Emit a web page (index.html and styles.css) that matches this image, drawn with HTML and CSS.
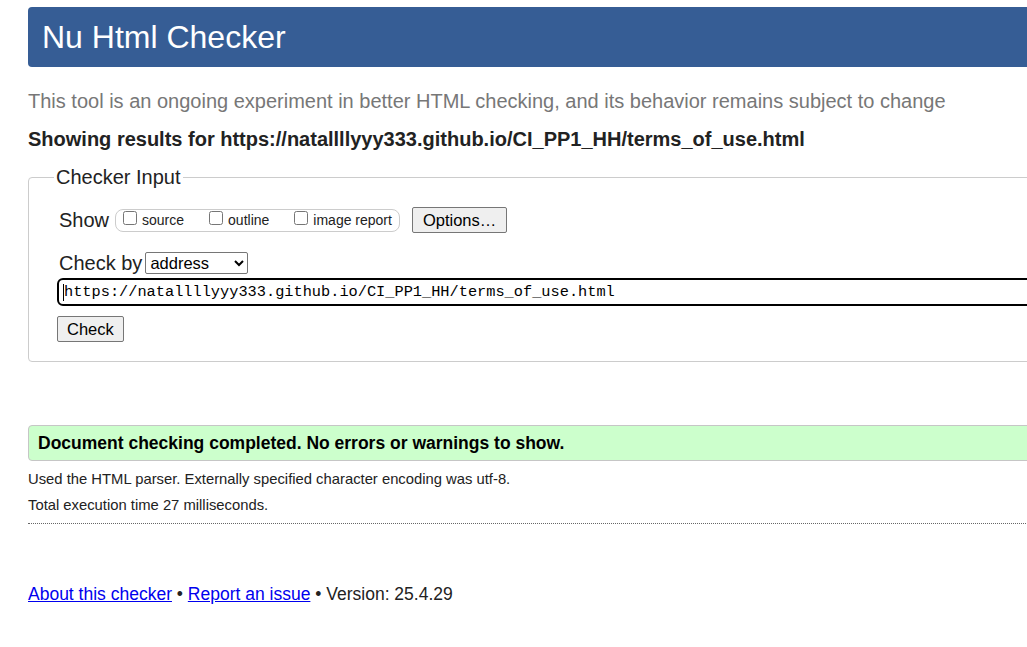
FILE: index.html
```html
<!DOCTYPE html>
<html lang="en">
<head>
<meta charset="utf-8">
<title>Nu Html Checker</title>
<link rel="stylesheet" href="styles.css">
</head>
<body>
<div class="page">
  <h1 class="header">Nu Html Checker</h1>
  <p class="intro">This tool is an ongoing experiment in better HTML checking, and its behavior remains subject to change</p>
  <p class="results">Showing results for https://natallllyyy333.github.io/CI_PP1_HH/terms_of_use.html</p>
  <fieldset class="input-box">
    <legend class="legend">Checker Input</legend>
    <div class="row show-row">
      <span class="label">Show</span>
      <span class="pill">
        <label class="opt"><input type="checkbox" class="cb"><span>source</span></label>
        <label class="opt"><input type="checkbox" class="cb"><span>outline</span></label>
        <label class="opt"><input type="checkbox" class="cb"><span>image report</span></label>
      </span>
      <button class="btn options">Options…</button>
    </div>
    <div class="row by-row">
      <span class="label">Check by</span>
      <select class="select"><option>address</option></select>
    </div>
    <div class="url-wrap">
      <span class="caret"></span>
      <input class="url" type="text" value="https://natallllyyy333.github.io/CI_PP1_HH/terms_of_use.html">
    </div>
    <div class="row">
      <button class="btn check">Check</button>
    </div>
  </fieldset>
  <div class="success">Document checking completed. No errors or warnings to show.</div>
  <p class="meta">Used the HTML parser. Externally specified character encoding was utf-8.</p>
  <p class="meta">Total execution time 27 milliseconds.</p>
  <div class="dots"></div>
  <p class="footer"><a href="#">About this checker</a> • <a href="#">Report an issue</a> • Version: 25.4.29</p>
</div>
</body>
</html>
```

FILE: styles.css
```css
html, body {
  margin: 0;
  padding: 0;
  background: #fff;
  overflow: hidden;
}
body {
  font-family: "Liberation Sans", Arial, sans-serif;
  color: #222;
  width: 1027px;
  height: 647px;
}
.page {
  width: 1100px;
  padding: 7px 0 0 28px;
}
.header {
  margin: 0;
  height: 60px;
  box-sizing: border-box;
  background: #365d95;
  color: #fff;
  font-weight: normal;
  font-size: 32px;
  line-height: 60px;
  padding-left: 14px;
  border-radius: 4px;
}
.intro {
  margin: 22px 0 0;
  font-size: 20px;
  line-height: 24px;
  color: #777;
}
.results {
  margin: 14px 0 0;
  font-size: 20px;
  line-height: 24px;
  font-weight: bold;
  color: #222;
}
.input-box {
  margin: 14px 0 0;
  border: 1px solid #ccc;
  border-radius: 4px;
  padding: 8px 0 19px 30px;
  min-width: 0;
}
.legend {
  font-size: 20px;
  padding: 0 2px;
  margin-left: -5px;
  line-height: 24px;
}
.row {
  display: flex;
  align-items: center;
}
.label {
  font-size: 20px;
  line-height: 24px;
  margin-right: 6px;
}
.show-row {
  height: 26px;
  margin-top: 10px;
}
.pill {
  display: inline-flex;
  align-items: center;
  border: 1px solid #ccc;
  border-radius: 8px;
  height: 23px;
  box-sizing: border-box;
  padding: 0 7px 0 7px;
  gap: 25px;
}
.opt {
  display: inline-flex;
  align-items: center;
  font-size: 14px;
}
.cb {
  margin: 0 5px 5px 0;
  width: 14px;
  height: 14px;
}
.btn {
  font-family: "Liberation Sans", Arial, sans-serif;
  font-size: 16.5px;
  background: #efefef;
  border: 1px solid #767676;
  border-radius: 2px;
  color: #000;
  padding: 1px 10px;
}
.options {
  margin-left: 12px;
  height: 26px;
}
.by-row {
  margin-top: 18px;
}
.by-row .label {
  margin-right: 3px;
}
.select {
  font-family: "Liberation Sans", Arial, sans-serif;
  font-size: 16.5px;
  height: 22px;
  width: 103px;
  border: 1px solid #767676;
  border-radius: 2px;
  background: #fff;
  color: #000;
}
.url-wrap {
  position: relative;
  margin-top: 3px;
  margin-left: -2px;
}
.caret {
  position: absolute;
  left: 6px;
  top: 6px;
  width: 1px;
  height: 17px;
  background: #000;
}
.url {
  box-sizing: border-box;
  width: 1020px;
  height: 28px;
  border: 2px solid #000;
  border-radius: 6px;
  font-family: "Liberation Mono", "DejaVu Sans Mono", monospace;
  font-size: 15.3px;
  padding: 0 5px;
  color: #000;
  outline: none;
}
.check {
  margin-top: 10px;
  margin-left: -2px;
  height: 26px;
  padding: 1px 9px;
}
.success {
  margin-top: 63px;
  height: 36px;
  box-sizing: border-box;
  background: #ccffcc;
  border: 1px solid #c6c6c6;
  border-radius: 4px;
  padding-left: 9px;
  font-weight: bold;
  font-size: 17.5px;
  line-height: 34px;
  color: #000;
}
.meta {
  margin: 10px 0 0;
  font-size: 14.8px;
  line-height: 16px;
  color: #222;
}
.dots {
  margin-top: 10px;
  border-top: 1px dotted #666;
}
.footer {
  margin: 60px 0 0;
  font-size: 17.5px;
  line-height: 20px;
  color: #222;
}
.footer a {
  color: #0000ee;
}
```
